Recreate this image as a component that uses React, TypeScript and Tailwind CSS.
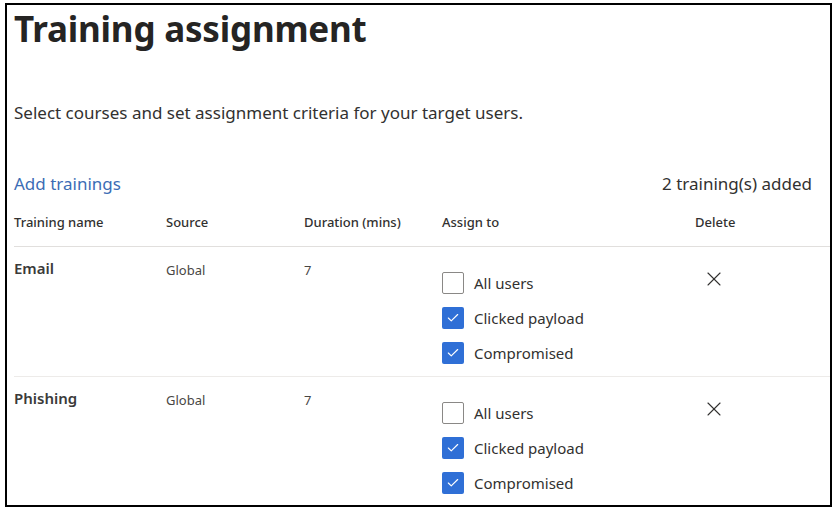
import { X, Check } from "lucide-react";

type Training = {
  name: string;
  source: string;
  duration: number;
  assign: { label: string; checked: boolean }[];
};

const trainings: Training[] = [
  {
    name: "Email",
    source: "Global",
    duration: 7,
    assign: [
      { label: "All users", checked: false },
      { label: "Clicked payload", checked: true },
      { label: "Compromised", checked: true },
    ],
  },
  {
    name: "Phishing",
    source: "Global",
    duration: 7,
    assign: [
      { label: "All users", checked: false },
      { label: "Clicked payload", checked: true },
      { label: "Compromised", checked: true },
    ],
  },
];

const cols = "grid grid-cols-[152px_138px_138px_253px_1fr]";

function Box({ checked }: { checked: boolean }) {
  if (checked) {
    return (
      <span className="flex h-[22px] w-[22px] items-center justify-center rounded-[2px] bg-[#2f6fd6]">
        <Check className="h-[14px] w-[14px] text-white" strokeWidth={2} />
      </span>
    );
  }
  return (
    <span className="h-[22px] w-[22px] rounded-[2px] border border-[#8a8886] bg-white" />
  );
}

export default function App() {
  return (
    <div className="bg-white pl-[5px] pt-[3px] font-['Noto_Sans',sans-serif]">
      <div className="h-[504px] w-[827px] overflow-hidden border-2 border-black pl-[7px]">
        {/* Header */}
        <h1 className="mt-[1px] text-[35px] font-bold leading-[46px] tracking-[-0.2px] text-[#252423]">
          Training assignment
        </h1>

        <p className="mt-[50px] text-[17px] leading-[22px] text-[#323130]">
          Select courses and set assignment criteria for your target users.
        </p>

        <div className="mt-[48px] flex items-center justify-between pr-[18px]">
          <span className="text-[17px] leading-[24px] text-[#3c6db5]">
            Add trainings
          </span>
          <span className="text-[17px] leading-[24px] text-[#323130]">
            2 training(s) added
          </span>
        </div>

        {/* Table */}
        <div
          className={`${cols} mt-[16px] h-[35px] border-b border-[#e1dfdd] text-[13px] font-medium leading-[20px] text-[#323130]`}
        >
          <span>Training name</span>
          <span>Source</span>
          <span>Duration (mins)</span>
          <span>Assign to</span>
          <span>Delete</span>
        </div>

        {trainings.map((t) => (
          <div
            key={t.name}
            className={`${cols} h-[130px] border-b border-[#edebe9] pt-[10px]`}
          >
            <span className="text-[15px] font-semibold leading-[22px] text-[#3b3a39]">
              {t.name}
            </span>
            <span className="pt-[3px] text-[13px] leading-[20px] text-[#484644]">
              {t.source}
            </span>
            <span className="pt-[3px] text-[13px] leading-[20px] text-[#484644]">
              {t.duration}
            </span>
            <div className="flex flex-col gap-[13px] pt-[15px]">
              {t.assign.map((a) => (
                <label key={a.label} className="flex items-center gap-[10px]">
                  <Box checked={a.checked} />
                  <span className="text-[15px] leading-[22px] text-[#323130]">
                    {a.label}
                  </span>
                </label>
              ))}
            </div>
            <div className="pl-[7px] pt-[10px]">
              <X className="h-[24px] w-[24px] text-[#323130]" strokeWidth={1.1} />
            </div>
          </div>
        ))}
      </div>
    </div>
  );
}
